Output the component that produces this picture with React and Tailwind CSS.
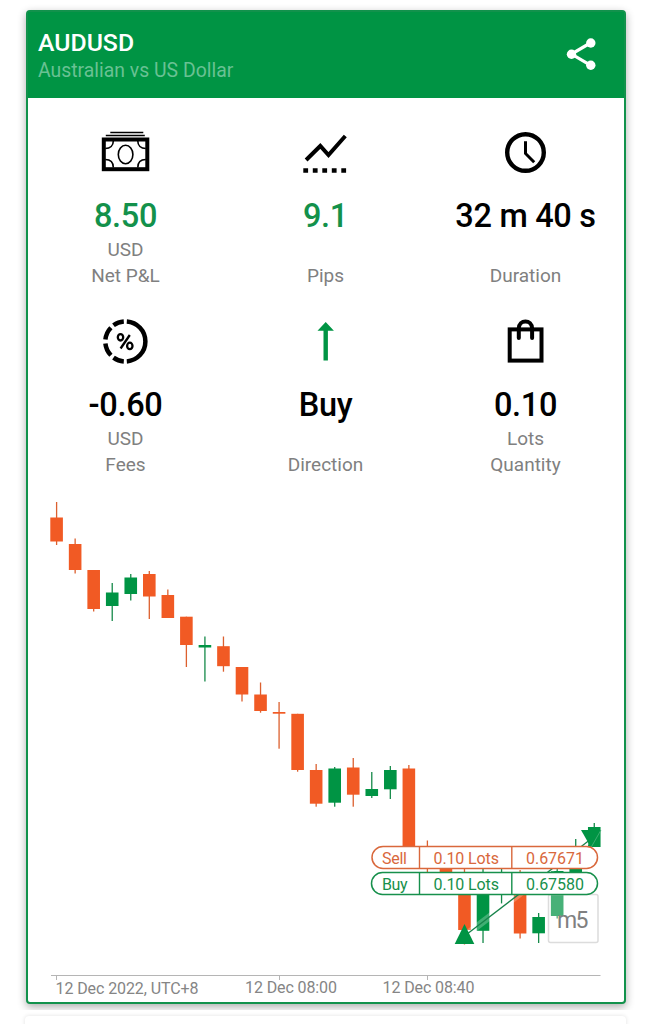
const GREEN = '#009444'
const ORANGE = '#f15a24'

// Candles: top and bottom of the body, high and low of the wick
const candles = [
  { top: 517.5, bottom: 541.5, high: 502, low: 545 },
  { top: 544, bottom: 570, high: 538.5, low: 573.5 },
  { top: 570, bottom: 609, high: 570, low: 611.5 },
  { top: 592.5, bottom: 606, high: 583, low: 621, up: true },
  { top: 577.5, bottom: 594, high: 574, low: 600.5, up: true },
  { top: 574, bottom: 596.5, high: 571, low: 619 },
  { top: 595, bottom: 618, high: 589.5, low: 618 },
  { top: 616.7, bottom: 645, high: 616.7, low: 667 },
  { top: 645, bottom: 647.5, high: 636.5, low: 681.5, up: true },
  { top: 646.2, bottom: 666.2, high: 636.5, low: 671.7 },
  { top: 667, bottom: 694.5, high: 667, low: 701.5 },
  { top: 694.5, bottom: 711, high: 682.5, low: 712.7 },
  { top: 712, bottom: 713.7, high: 702, low: 748.7 },
  { top: 713.8, bottom: 770, high: 713.8, low: 771.7 },
  { top: 770, bottom: 803.7, high: 764, low: 806.7 },
  { top: 768.5, bottom: 802.7, high: 767, low: 806.7, up: true },
  { top: 767.5, bottom: 794.7, high: 758, low: 806.7 },
  { top: 789, bottom: 796, high: 772, low: 798, up: true },
  { top: 770, bottom: 789.3, high: 766, low: 799, up: true },
  { top: 768.5, bottom: 850, high: 765, low: 850 },
  { top: 850, bottom: 864, high: 840.5, low: 876 },
  { top: 860, bottom: 880, high: 855, low: 880 },
  { top: 878, bottom: 930, high: 866, low: 944.5 },
  { top: 878, bottom: 930.8, high: 866, low: 943, up: true },
  { top: 878, bottom: 890, high: 866, low: 903.5, up: true },
  { top: 878, bottom: 933.5, high: 870, low: 938.5 },
  { top: 917, bottom: 933.3, high: 913, low: 943, up: true },
  { top: 871, bottom: 916, high: 864, low: 918.5, up: true },
  { top: 852, bottom: 880, high: 839, low: 880, up: true },
  { top: 827, bottom: 847, high: 823, low: 847, up: true },
]

const ticks = [
  { x: 56.5, textX: 55.5, textY: 994.3, width: 143, label: '12 Dec 2022, UTC+8' },
  { x: 279.5, textX: 245, textY: 992.5, width: 92, label: '12 Dec 08:00' },
  { x: 427.5, textX: 382.5, textY: 992.5, width: 92, label: '12 Dec 08:40' },
]

function CashIcon() {
  return (
    <svg width="56" height="56" viewBox="0.700 0 56 56" fill="none" stroke="#000">
      <path d="M13 8.500h33M8.500 11.500h39" strokeWidth="1.500" />
      <rect x="6.500" y="15.500" width="43.500" height="29.700" strokeWidth="4" />
      <ellipse cx="28.300" cy="30.500" rx="7.300" ry="9.200" strokeWidth="1.600" />
      <path d="M8 24.500c5 0 8-3 8-7.500M48.500 24.500c-5 0-8-3-8-7.500M8 35.500c5 0 8 3 8 8M48.500 35.500c-5 0-8 3-8 8" strokeWidth="1.600" />
    </svg>
  )
}

function PipsIcon() {
  return (
    <svg width="56" height="56" viewBox="0.700 0 56 56" fill="none" stroke="#000" strokeWidth="4">
      <path d="M8.800 36 23 22l8.200 9L48 12" />
      <path d="M6 46.500h44" strokeWidth="4.600" strokeDasharray="4.800 4.700" />
    </svg>
  )
}

function ClockIcon() {
  return (
    <svg width="56" height="56" viewBox="0.500 0 56 56" fill="none" stroke="#000">
      <circle cx="28" cy="28.500" r="18.300" strokeWidth="4.400" />
      <path d="M28 17.200v12.300l8.700 8.700" strokeWidth="3" />
    </svg>
  )
}

function PercentIcon() {
  return (
    <svg width="56" height="56" viewBox="0.700 0 56 56" fill="none" stroke="#000" strokeWidth="4.500">
      <path d="M29.500 8.500A20 20 0 0 1 29.500 48.400" />
      <path d="M26.500 8.500A20 20 0 0 0 16.200 12.300" />
      <path d="M13.600 14.700A20 20 0 0 0 8.100 26.500" />
      <path d="M8.100 30.400A20 20 0 0 0 13.600 42.200" />
      <path d="M16.200 44.600A20 20 0 0 0 26.500 48.400" />
      <g strokeWidth="2.300">
        <ellipse cx="23.200" cy="24.300" rx="2.700" ry="3.200" />
        <ellipse cx="32.500" cy="32.900" rx="2.700" ry="3.200" />
        <path d="M32.500 22 23.300 35.500" />
      </g>
    </svg>
  )
}

function ArrowIcon() {
  return (
    <svg width="56" height="56" viewBox="0.500 0 56 56" fill={GREEN}>
      <path d="M28.200 9 36.400 17.800h-6v29.800h-4.400V17.800h-6z" />
    </svg>
  )
}

function BagIcon() {
  return (
    <svg width="56" height="56" viewBox="0.500 0 56 56" fill="none" stroke="#000" strokeWidth="4">
      <rect x="12.200" y="16.400" width="31.800" height="31.200" />
      <path d="M21.300 25V15.500c0-9.500 13.300-9.500 13.300 0v9.500" strokeLinecap="round" />
    </svg>
  )
}

const stats = [
  { icon: CashIcon, value: '8.50', unit: 'USD', label: 'Net P&L', color: 'text-[#13914b]' },
  { icon: PipsIcon, value: '9.1', unit: '', label: 'Pips', color: 'text-[#13914b]' },
  { icon: ClockIcon, value: '32 m 40 s', unit: '', label: 'Duration', color: 'text-black' },
  { icon: PercentIcon, value: '-0.60', unit: 'USD', label: 'Fees', color: 'text-black' },
  { icon: ArrowIcon, value: 'Buy', unit: '', label: 'Direction', color: 'text-black' },
  { icon: BagIcon, value: '0.10', unit: 'Lots', label: 'Quantity', color: 'text-black' },
]

function Stat({ icon: Icon, value, unit, label, color }) {
  return (
    <div className="flex h-[189px] flex-col items-center">
      <Icon />
      <div className={`mt-4 h-10 whitespace-nowrap text-[32.5px] font-medium leading-[41px] tracking-[-0.3px] ${color}`}>{value}</div>
      <div className="mt-px h-[26px] text-[19px] leading-[26px] text-[#808080]">{unit}</div>
      <div className="h-[26px] text-[19px] leading-[26px] text-[#808080]">{label}</div>
    </div>
  )
}

// One row of the order: side, lots and price
function OrderTag({ x, y, color, side, price }) {
  const right = 597.5
  return (
    <g fill={color} fontSize="16">
      <rect x={x} y={y} width={right - x} height="22" rx="11" fill="#fff" stroke={color} strokeWidth="1.500" />
      <path d={`M419.500 ${y}v22M511.800 ${y}v22`} stroke={color} strokeWidth="1.400" />
      <text x="382" y={y + 17} textLength={side === 'Sell' ? 25 : 25.5}>{side}</text>
      <text x="433.500" y={y + 17} textLength="65.500">0.10 Lots</text>
      <text x="526" y={y + 17} textLength="58">{price}</text>
    </g>
  )
}

function Chart() {
  return (
    <svg className="block h-[511px] w-[596px]" viewBox="28 490 596 511">
      {candles.map((c, i) => {
        const x = 56.6 + i * 18.54
        return (
          <g key={i}>
            <rect x={x - 0.65} y={c.high} width="1.300" height={c.low - c.high} fill={c.up ? '#168a4a' : '#dc602f'} />
            <rect x={x - 6.3} y={c.top} width="12.600" height={c.bottom - c.top} fill={c.up ? GREEN : ORANGE} />
          </g>
        )
      })}

      {/* Entry to exit */}
      <path d="M464.500 936 591 839" stroke="#fff" strokeOpacity="0.250" strokeWidth="7" />
      <path d="M464.500 936 591 839" stroke="#17834a" strokeWidth="1.300" />
      <path d="M464.500 924 474.300 944h-19.600z" fill={GREEN} />
      <path d="M581 830h20l-10 17.500z" fill={GREEN} />
      <path d="M601 830 591 847.500" stroke="#58b784" strokeWidth="0.700" />

      {/* Timeframe */}
      <rect x="548.500" y="894.500" width="49.500" height="48" rx="2" fill="#fff" fillOpacity="0.280" stroke="#dcdcdc" strokeWidth="1.500" />
      <text x="557" y="927.500" fontSize="23" fill="#808080" textLength="31.500">m5</text>

      <OrderTag x={372} y={846.5} color="#d9683c" side="Sell" price="0.67671" />
      <OrderTag x={371.5} y={872.5} color="#17904c" side="Buy" price="0.67580" />

      <path d="M51 975.500h549.500" stroke="#b5b5b5" />
      {ticks.map((t) => (
        <g key={t.label}>
          <path d={`M${t.x} 975.500v4.500`} stroke="#b5b5b5" />
          <text x={t.textX} y={t.textY} fontSize="16" fill="#858585" textLength={t.width}>{t.label}</text>
        </g>
      ))}
    </svg>
  )
}

function App() {
  return (
    <div className="h-[1024px] w-[651px] overflow-hidden bg-white font-['Roboto',sans-serif]">
      <div className="h-[1010px] overflow-hidden pl-[26px] pt-[10px]">
        <div className="flex h-[994px] w-[600px] flex-col rounded-[4px] border-2 border-[#12924c] bg-white shadow-[0_3px_9px_rgba(0,0,0,0.320)]">
          <header className="flex h-[86px] shrink-0 items-center justify-between bg-[#009444] pl-[10px] pr-[25px]">
            <div className="pt-[3px]">
              <h1 className="text-[24.8px] font-medium leading-7 text-white">AUDUSD</h1>
              <p className="mt-px text-[19.4px] leading-[26px] text-[#69c193]">Australian vs US Dollar</p>
            </div>
            <svg className="mb-0.5" width="36" height="36" viewBox="0 0 36 36" fill="#fff">
              <path d="M27.300 7 8.500 18l18.800 11.200" fill="none" stroke="#fff" strokeWidth="3.200" />
              <circle cx="27.800" cy="7" r="4.700" />
              <circle cx="8.500" cy="18.200" r="4.700" />
              <circle cx="27.800" cy="29.200" r="4.700" />
            </svg>
          </header>

          <div className="grid h-[392px] shrink-0 grid-cols-[200px_200px_200px] justify-center pr-px pt-[26px]">
            {stats.map((s) => (
              <Stat key={s.label} {...s} />
            ))}
          </div>

          <Chart />
        </div>
      </div>

      {/* Top of the next card */}
      <div className="ml-[25px] mt-[6px] h-10 w-[601px] rounded-[4px] bg-white shadow-[0_0_4px_rgba(0,0,0,0.120)]" />
    </div>
  )
}

export default App
